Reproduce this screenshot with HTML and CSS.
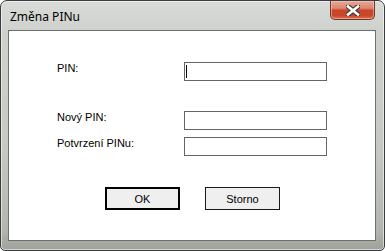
FILE: index.html
```html
<!DOCTYPE html>
<html lang="cs">

<head>
    <meta charset="UTF-8">
    <meta name="viewport" content="width=device-width, initial-scale=1.0">
    <title>Změna PINu</title>
    <link rel="stylesheet" href="styles.css">
</head>

<body>
    <div class="window">
        <div class="titlebar">
            <span class="title">Změna PINu</span>
            <button class="close" aria-label="Zavřít">
                <svg width="14" height="11" viewBox="0 0 14 11">
                    <path d="M2 1.5 L12 9.5 M12 1.5 L2 9.5" stroke="#3b3b3b" stroke-width="5" stroke-linecap="square" />
                    <path d="M2 1.5 L12 9.5 M12 1.5 L2 9.5" stroke="#ffffff" stroke-width="2.6" stroke-linecap="square" />
                </svg>
            </button>
        </div>

        <div class="client">
            <div class="form">
                <label class="label" for="pin">PIN:</label>
                <div class="field"><input type="password" id="pin" autofocus><span class="caret"></span></div>

                <label class="label row-gap" for="newPin">Nový PIN:</label>
                <div class="field row-gap"><input type="password" id="newPin"></div>

                <label class="label" for="confirmPin">Potvrzení PINu:</label>
                <div class="field"><input type="password" id="confirmPin"></div>
            </div>

            <div class="buttons">
                <button class="btn default">OK</button>
                <button class="btn">Storno</button>
            </div>
        </div>
    </div>
</body>

</html>
```

FILE: styles.css
```css
* {
    box-sizing: border-box;
}

body {
    margin: 0;
    font-family: "Liberation Sans", Arial, sans-serif;
    font-size: 11px;
    background-color: #ffffff;
}

.window {
    width: 385px;
    height: 251px;
    padding: 0 8px 9px 7px;
    border: 1px solid #3a3d3f;
    border-radius: 7px 7px 5px 5px;
    box-shadow: inset 0 0 0 1px rgba(255, 255, 255, 0.55);
    background: linear-gradient(180deg, #d9dbd8 0%, #cfd1cd 12%, #c6c9c3 60%, #b3b6ae 92%, #9fa29a 100%);
}

.titlebar {
    display: flex;
    align-items: flex-start;
    height: 29px;
}

.title {
    padding: 9px 0 0 2px;
    font-family: "Noto Sans", "Open Sans", sans-serif;
    font-size: 12px;
    line-height: 14px;
    color: #000000;
}

.close {
    display: flex;
    align-items: center;
    justify-content: center;
    margin-left: auto;
    margin-right: 1px;
    width: 45px;
    height: 19px;
    padding: 0;
    border: 1px solid #6b3a30;
    border-top: none;
    border-radius: 0 0 5px 5px;
    background: linear-gradient(180deg, #e8a896 0%, #dc8670 40%, #c9452a 52%, #c8482c 80%, #e0704c 100%);
    box-shadow: inset 0 0 0 1px rgba(255, 220, 210, 0.45);
}

.close svg {
    display: block;
}

.client {
    height: 211px;
    border: 1px solid #6b6f72;
    background-color: #ffffff;
}

.form {
    display: grid;
    grid-template-columns: 127px 143px;
    row-gap: 7px;
    padding: 31px 0 0 48px;
}

.label {
    line-height: 13px;
    color: #000000;
}

.row-gap {
    margin-top: 23px;
}

.field {
    position: relative;
    height: 19px;
}

.field input {
    width: 143px;
    height: 19px;
    margin: 0;
    padding: 0 3px;
    border: 1px solid #646464;
    outline: none;
    background-color: #ffffff;
    font-family: inherit;
    font-size: 11px;
    caret-color: transparent;
}

.caret {
    position: absolute;
    left: 2px;
    top: 3px;
    width: 1px;
    height: 13px;
    background-color: #000000;
}

.buttons {
    display: flex;
    justify-content: center;
    gap: 25px;
    margin-top: 31px;
    padding-left: 1px;
}

.btn {
    width: 75px;
    height: 23px;
    padding: 0;
    border: 1px solid #1a1a1a;
    background-color: #efefef;
    font-family: inherit;
    font-size: 11px;
    color: #000000;
}

.btn.default {
    border: 2px solid #000000;
}
```
